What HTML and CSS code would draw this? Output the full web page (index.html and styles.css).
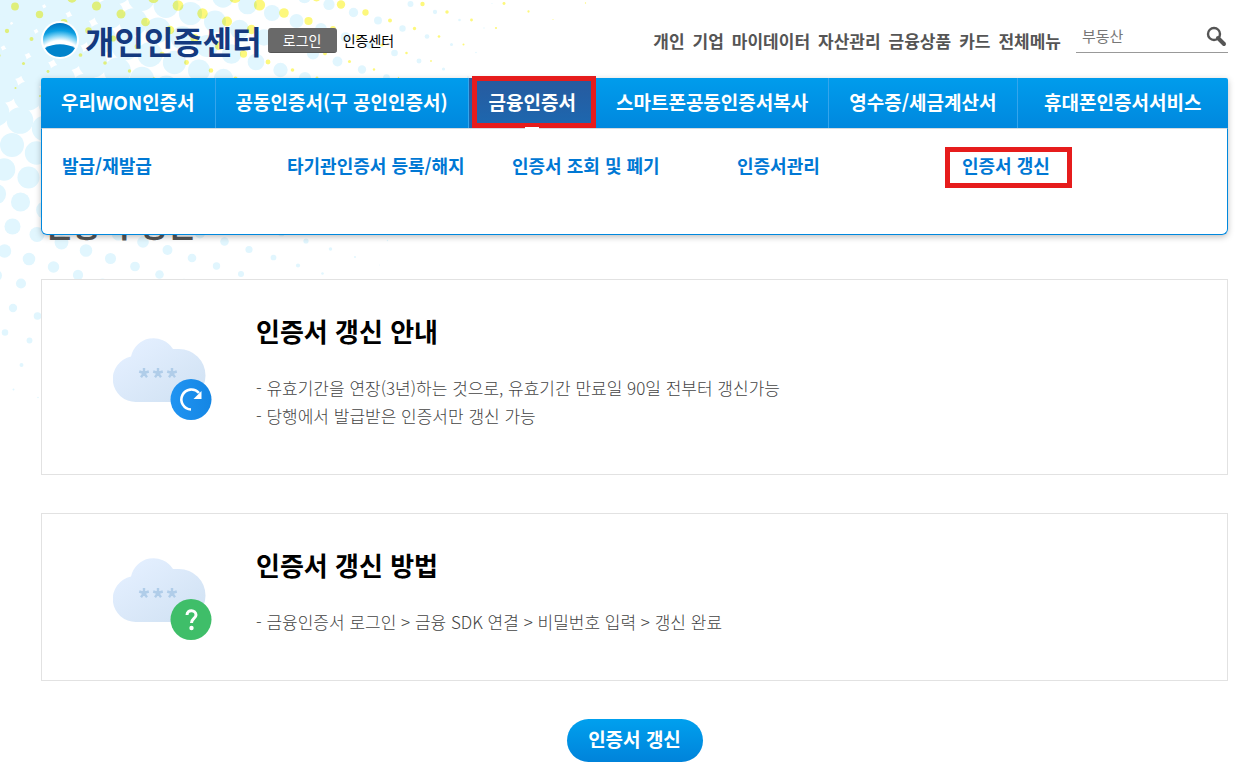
FILE: index.html
```html
<!DOCTYPE html>
<html lang="ko">

<head>
  <meta charset="UTF-8">
  <meta name="viewport" content="width=device-width, initial-scale=1.0">
  <title>개인인증센터</title>
  <link rel="stylesheet" href="styles.css">
</head>

<body>
  <svg id="dots" class="dots" aria-hidden="true"></svg>

  <div class="wrap">
    <header class="header">
      <a href="#" class="logo">
        <svg class="logo-mark" viewBox="0 0 38 38">
          <defs>
            <radialGradient id="sky" gradientUnits="userSpaceOnUse" cx="19" cy="44" r="42">
              <stop offset="0.58" stop-color="#fff" />
              <stop offset="0.7" stop-color="#7fd3f6" />
              <stop offset="0.82" stop-color="#0a9fe2" />
              <stop offset="1" stop-color="#0073c0" />
            </radialGradient>
          </defs>
          <circle cx="19" cy="19" r="19" fill="#fff" />
          <circle cx="19" cy="19" r="17" fill="url(#sky)" />
          <path d="M4 27C13 22 25 22 34 27C31 33 25 36 19 36S7 33 4 27Z" fill="#0083cb" />
        </svg>
        <span class="logo-text">개인인증센터</span>
      </a>
      <button type="button" class="btn-login">로그인</button>
      <a href="#" class="center-link">인증센터</a>

      <nav class="gnb">
        <a href="#">개인</a>
        <a href="#">기업</a>
        <a href="#">마이데이터</a>
        <a href="#">자산관리</a>
        <a href="#">금융상품</a>
        <a href="#">카드</a>
        <a href="#">전체메뉴</a>
      </nav>
      <form class="search">
        <input type="text" placeholder="부동산" aria-label="검색어">
        <button type="button" aria-label="검색">
          <svg viewBox="0 0 22 22" width="22" height="22" fill="none" stroke="#555">
            <circle cx="8" cy="9" r="6" stroke-width="2.4" />
            <path d="M12 13L18 19" stroke-width="4" stroke-linecap="round" />
          </svg>
        </button>
      </form>
    </header>

    <nav class="menu">
      <ul class="menu-main">
        <li><a href="#">우리WON인증서</a></li>
        <li><a href="#">공동인증서(구 공인인증서)</a></li>
        <li class="on"><a href="#">금융인증서</a></li>
        <li><a href="#">스마트폰공동인증서복사</a></li>
        <li><a href="#">영수증/세금계산서</a></li>
        <li><a href="#">휴대폰인증서서비스</a></li>
      </ul>
      <ul class="menu-sub">
        <li><a href="#">발급/재발급</a></li>
        <li><a href="#">타기관인증서 등록/해지</a></li>
        <li><a href="#">인증서 조회 및 폐기</a></li>
        <li><a href="#">인증서관리</a></li>
        <li class="mark"><a href="#">인증서 갱신</a></li>
      </ul>
    </nav>

    <main>
      <h1>인증서 갱신</h1>

      <section class="card">
        <svg class="cloud" viewBox="0 0 100 84">
          <defs>
            <linearGradient id="cloud" x1="0" y1="0" x2="1" y2="1">
              <stop offset="0.2" stop-color="#e2eefe" />
              <stop offset="0.8" stop-color="#d4e4f5" />
            </linearGradient>
            <linearGradient id="blue" x1="0" x2="1">
              <stop offset="0" stop-color="#2094f2" />
              <stop offset="1" stop-color="#1486e4" />
            </linearGradient>
            <g id="stars" stroke="#b0cde9" stroke-width="2.4">
              <path id="star" d="M31 35V30M31 35L26.2 33.5M31 35L28 39.2M31 35L34 39.2M31 35L35.8 33.5" />
              <use href="#star" x="14" />
              <use href="#star" x="28" />
            </g>
          </defs>
          <path d="M23 64A23 23 0 0 1 18 18.500A23 23 0 0 1 60 11H66A26.500 26.500 0 0 1 66 64Z" fill="url(#cloud)" />
          <use href="#stars" />
          <circle cx="78" cy="61.500" r="20.500" fill="url(#blue)" />
          <path d="M78 71.500A10 10 0 1 1 86 55" fill="none" stroke="#fff" stroke-width="2.600" />
          <path d="M88.500 53V61H80.500Z" fill="#fff" />
        </svg>
        <div class="card-text">
          <h2>인증서 갱신 안내</h2>
          <ul>
            <li>- 유효기간을 연장(3년)하는 것으로, 유효기간 만료일 90일 전부터 갱신가능</li>
            <li>- 당행에서 발급받은 인증서만 갱신 가능</li>
          </ul>
        </div>
      </section>

      <section class="card">
        <svg class="cloud" viewBox="0 0 100 84">
          <path d="M23 64A23 23 0 0 1 18 18.500A23 23 0 0 1 60 11H66A26.500 26.500 0 0 1 66 64Z" fill="url(#cloud)" />
          <use href="#stars" />
          <circle cx="78" cy="61.500" r="20.500" fill="#3fbe69" />
          <path d="M74 57C74 51 83 51.500 83 57C83 60.500 78.500 60.500 78.500 65" fill="none" stroke="#fff" stroke-width="3" />
          <circle cx="78.500" cy="70" r="2.200" fill="#fff" />
        </svg>
        <div class="card-text">
          <h2>인증서 갱신 방법</h2>
          <ul>
            <li>- 금융인증서 로그인 &gt; 금융 SDK 연결 &gt; 비밀번호 입력 &gt; 갱신 완료</li>
          </ul>
        </div>
      </section>

      <div class="btn-area">
        <button type="button" class="btn-renew">인증서 갱신</button>
      </div>
    </main>
  </div>

  <script>
    const dots = document.getElementById('dots')

    // [거리, 반지름]
    const blueSteps = [[0, 18], [60, 16], [110, 14], [145, 12], [180, 11], [227, 8], [285, 5], [340, 3], [390, 1], [430, 0]]
    const yellowSteps = [[0, 6], [20, 5], [45, 4], [75, 2], [130, 1], [150, 0]]

    const radius = (steps, d) => {
      for (let i = 1; i < steps.length; i++) {
        const [d0, r0] = steps[i - 1]
        const [d1, r1] = steps[i]
        if (d <= d1) return r0 + (r1 - r0) * (d - d0) / (d1 - d0)
      }
      return 0
    }

    const draw = (name, dx, getRadius) => {
      for (let m = -12; m < 30; m++) {
        for (let n = -24; n < 16; n++) {
          const x = 12 + dx + m * 24.5 - n * 8
          const y = 145 + m * 8 + n * 24.5
          const r = getRadius(x, y)
          if (r < 0.4 || x < -20 || y < -20) continue
          const circle = document.createElementNS('http://www.w3.org/2000/svg', 'circle')
          circle.setAttribute('cx', x)
          circle.setAttribute('cy', y)
          circle.setAttribute('r', r)
          circle.setAttribute('class', name)
          dots.appendChild(circle)
        }
      }
    }

    draw('dot-blue', 0, (x, y) => radius(blueSteps, Math.hypot(x * 0.83, y)))
    draw('dot-yellow', 12, (x, y) => {
      const side = x > 240 ? (x - 240) * 0.4 : (240 - x) * 0.2
      return radius(yellowSteps, Math.max(0, y + side - 5))
    })
  </script>
</body>

</html>
```
FILE: styles.css
```css
* {
  box-sizing: border-box;
}

body {
  margin: 0;
  background: #fff;
  color: #444;
  font-family: "Noto Sans CJK KR", sans-serif;
  font-size: 17px;
}

a {
  color: inherit;
  text-decoration: none;
}

ul {
  margin: 0;
  padding: 0;
  list-style: none;
}

button,
input {
  font-family: inherit;
}

.dots {
  position: absolute;
  top: 0;
  left: 0;
  z-index: -1;
  width: 620px;
  height: 420px;
}

.dot-blue {
  fill: #e1f6fe;
}

.dot-yellow {
  fill: #fdf87c;
  mix-blend-mode: multiply;
}

.wrap {
  padding: 0 25px 0 41px;
}

/* header */
.header {
  display: flex;
  align-items: center;
  height: 78px;
  padding-top: 2px;
}

.logo {
  display: flex;
  align-items: center;
  gap: 6px;
  margin-right: 6px;
}

.logo-mark {
  width: 38px;
  height: 38px;
}

.logo-text {
  color: #14397f;
  font-size: 32px;
  font-weight: 700;
  line-height: 38px;
}

.btn-login {
  width: 69px;
  height: 25px;
  padding: 0;
  border: 0;
  border-bottom: 1px solid #555;
  border-radius: 3px;
  background: #696969;
  color: #fff;
  font-size: 14px;
  line-height: 24px;
}

.center-link {
  margin-left: 6px;
  color: #000;
  font-size: 14px;
}

.gnb {
  display: flex;
  gap: 8px;
  margin-left: auto;
  color: #555;
  font-size: 17px;
  font-weight: 700;
}

.search {
  display: flex;
  align-items: center;
  width: 152px;
  height: 34px;
  margin: 0 0 8px 15px;
  border-bottom: 1px solid #999;
}

.search input {
  flex: 1;
  min-width: 0;
  padding: 0 6px;
  border: 0;
  background: none;
  font-size: 15px;
}

.search input::placeholder {
  color: #777;
}

.search button {
  display: flex;
  padding: 0;
  border: 0;
  background: none;
}

/* menu */
.menu {
  position: relative;
  height: 157px;
  border-radius: 2px 2px 6px 6px;
  background: #fff;
  box-shadow: 0 2px 6px rgba(0, 0, 0, 0.25);
}

.menu-main {
  display: flex;
  height: 50px;
  border-radius: 2px 2px 0 0;
  background: linear-gradient(#009cec, #0088de);
  color: #fff;
  font-size: 19px;
  font-weight: 700;
  line-height: 47px;
}

.menu-main li {
  padding: 0 20px;
  border-left: 1px solid #35a5ec;
  text-align: center;
}

.menu-main li:first-child {
  border-left: 0;
}

.menu-main li:last-child {
  flex: 1;
}

.menu-main .on {
  position: relative;
  background: linear-gradient(#285a9e, #1c68b0);
}

.menu-main .on::before {
  content: "";
  position: absolute;
  inset: -2px 0 0 3px;
  border: 5px solid #e61c1c;
}

.menu-main .on::after {
  content: "";
  position: absolute;
  bottom: -1px;
  left: 50%;
  width: 14px;
  height: 2px;
  margin-left: -7px;
  background: #fff;
}

.menu-main .on a {
  position: relative;
}

.menu-main .on + li {
  border-left: 0;
}

.menu-sub {
  display: grid;
  grid-template-columns: repeat(5, 225px);
  align-items: start;
  height: 107px;
  padding: 18px 0 0 20px;
  border: 1px solid #0088de;
  border-top-color: #d5dbe0;
  border-radius: 0 0 6px 6px;
  color: #0078d4;
  font-size: 18px;
  font-weight: 700;
  line-height: 36px;
}

.menu-sub .mark {
  justify-self: start;
  margin-left: -17px;
  padding: 0 17px 5px 12px;
  border: 5px solid #e61c1c;
  line-height: 26px;
  white-space: nowrap;
}

/* content */
h1 {
  margin: -33px 0 33px;
  padding-left: 3px;
  color: #555;
  font-size: 31px;
  font-weight: 700;
  line-height: 44px;
}

.card {
  display: flex;
  align-items: center;
  gap: 43px;
  margin-bottom: 38px;
  padding-left: 71px;
  border: 1px solid #e2e2e2;
  background: #fff;
}

.cloud {
  flex: none;
  width: 100px;
  height: 84px;
  margin-top: 6px;
}

.card-text {
  padding: 33px 0 44px;
}

.card h2 {
  margin: 0 0 25px;
  color: #000;
  font-size: 26px;
  font-weight: 700;
  line-height: 36px;
}

.card li {
  font-size: 17px;
  font-weight: 300;
  line-height: 28px;
}

.btn-area {
  text-align: center;
}

.btn-renew {
  width: 136px;
  height: 43px;
  padding: 0 0 4px;
  border: 0;
  border-radius: 22px;
  background: linear-gradient(#00a0ee, #0083da);
  color: #fff;
  font-size: 19px;
  font-weight: 700;
}
```
